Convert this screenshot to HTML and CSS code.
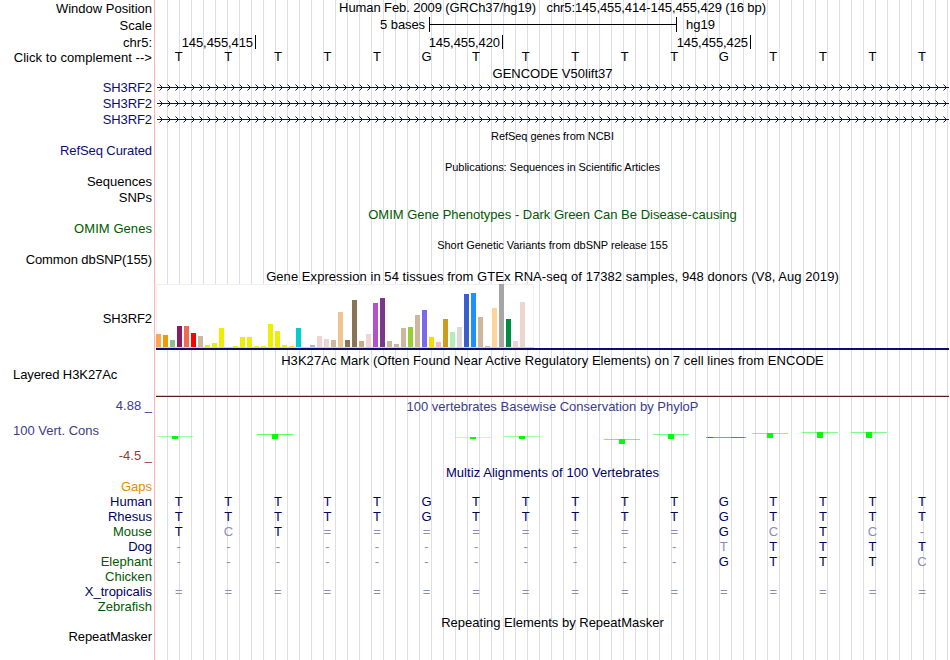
FILE: index.html
```html
<!DOCTYPE html>
<html lang="en">
<head>
  <meta charset="UTF-8" />
  <title>chr5:145,455,414-145,455,429 - Genome Browser</title>
  <link rel="stylesheet" href="styles.css">
</head>
<body>
  <div class="browser">
    <!-- position, scale, ruler -->
    <div class="row position">
      <div class="label low">Window Position</div>
      <div class="plot title tight">Human Feb. 2009 (GRCh37/hg19) &nbsp; chr5:145,455,414-145,455,429 (16 bp)</div>
    </div>
    <div class="row scale">
      <div class="label low">Scale</div>
      <div class="plot scale-plot">
        <span class="scale-size tight">5 bases</span>
        <span class="scale-bar"></span>
        <span>hg19</span>
      </div>
    </div>
    <div class="row ruler">
      <div class="label">chr5:</div>
      <div class="plot ruler-plot tight">
        <span class="tick first">145,455,415</span>
        <span class="tick">145,455,420</span>
        <span class="tick last">145,455,425</span>
      </div>
    </div>
    <div class="row complement">
      <div class="label low wide">Click to complement --&gt;</div>
      <div class="plot bases dark" data-seq="TTTTTGTTTTTGTTTT"></div>
    </div>

    <!-- genes -->
    <div class="row h14"><div class="plot title">GENCODE V50lift37</div></div>
    <div class="row h16"><div class="label gene tight">SH3RF2</div><div class="plot intron"></div></div>
    <div class="row h16"><div class="label gene tight">SH3RF2</div><div class="plot intron"></div></div>
    <div class="row h16"><div class="label gene tight">SH3RF2</div><div class="plot intron"></div></div>
    <div class="row h15"><div class="plot title small">RefSeq genes from NCBI</div></div>
    <div class="row h16"><div class="label gene tight">RefSeq Curated</div></div>
    <div class="row h15"><div class="plot title small">Publications: Sequences in Scientific Articles</div></div>
    <div class="row h16"><div class="label">Sequences</div></div>
    <div class="row h17"><div class="label">SNPs</div></div>
    <div class="row h14"><div class="plot title green">OMIM Gene Phenotypes - Dark Green Can Be Disease-causing</div></div>
    <div class="row h16"><div class="label green wide">OMIM Genes</div></div>
    <div class="row h15"><div class="plot title small">Short Genetic Variants from dbSNP release 155</div></div>
    <div class="row h17"><div class="label tight">Common dbSNP(155)</div></div>

    <!-- GTEx -->
    <div class="row h15"><div class="plot title wide">Gene Expression in 54 tissues from GTEx RNA-seq of 17382 samples, 948 donors (V8, Aug 2019)</div></div>
    <div class="row gtex">
      <div class="label tight">SH3RF2</div>
      <div class="plot gtex-plot"><div class="tissues" id="tissues"></div></div>
    </div>

    <!-- regulation -->
    <div class="row h14"><div class="plot title wide">H3K27Ac Mark (Often Found Near Active Regulatory Elements) on 7 cell lines from ENCODE</div></div>
    <div class="row layered">
      <div class="label left tight">Layered H3K27Ac</div>
      <div class="plot layered-plot"></div>
    </div>

    <!-- conservation -->
    <div class="row phylop">
      <div class="label phylop-label">
        <div class="blue">4.88 _</div>
        <div class="blue left">100 Vert. Cons</div>
        <div class="red">-4.5 _</div>
      </div>
      <div class="plot phylop-plot">
        <div class="title blue">100 vertebrates Basewise Conservation by PhyloP</div>
        <svg class="wiggle" id="wiggle" width="793" height="51" viewBox="156 414 793 51" shape-rendering="crispEdges"></svg>
      </div>
    </div>
    <div class="row h14"><div class="plot title navy wide">Multiz Alignments of 100 Vertebrates</div></div>
    <div class="row h15"><div class="label orange">Gaps</div></div>
    <!-- lower case = differs from human -->
    <div class="row h15"><div class="label navy">Human</div><div class="plot bases" data-seq="TTTTTGTTTTTGTTTT"></div></div>
    <div class="row h15"><div class="label navy">Rhesus</div><div class="plot bases" data-seq="TTTTTGTTTTTGTTTT"></div></div>
    <div class="row h15"><div class="label green">Mouse</div><div class="plot bases" data-seq="TcT========GcTc-"></div></div>
    <div class="row h15"><div class="label navy">Dog</div><div class="plot bases" data-seq="-----------tTTTT"></div></div>
    <div class="row h15"><div class="label green">Elephant</div><div class="plot bases" data-seq="-----------GTTTc"></div></div>
    <div class="row h15"><div class="label green">Chicken</div></div>
    <div class="row h15"><div class="label navy">X_tropicalis</div><div class="plot bases" data-seq="================"></div></div>
    <div class="row h16"><div class="label green">Zebrafish</div></div>

    <div class="row h14"><div class="plot title">Repeating Elements by RepeatMasker</div></div>
    <div class="row h16"><div class="label tight">RepeatMasker</div></div>
  </div>

  <script>
    // one letter per base
    document.querySelectorAll(".bases").forEach(el => {
      [...el.dataset.seq].forEach(ch => {
        const span = document.createElement("span");
        span.textContent = ch.toUpperCase();
        if (!/[A-Z]/.test(ch)) span.className = "mismatch";
        el.appendChild(span);
      });
    });

    // median expression, [height, color]
    const tissues = [
      [13, "#ffa54f"], [12, "#ee9a00"], [7, "#8fbc8f"], [21, "#8b1c62"], [21, "#ee6a50"], [14, "#ff0000"],
      [11, "#cdb79e"], [2, "#eeee00"], [4, "#eeee00"], [19, "#eeee00"], [0, "#eeee00"], [1, "#eeee00"],
      [10, "#eeee00"], [10, "#eeee00"], [1, "#eeee00"], [1, "#eeee00"], [23, "#eeee00"], [16, "#eeee00"],
      [2, "#eeee00"], [1, "#eeee00"], [19, "#00cdcd"], [0, "#ee82ee"], [2, "#9ac0cd"], [11, "#eed5d2"],
      [8, "#eed5d2"], [7, "#cdb79e"], [35, "#eec591"], [7, "#8b7355"], [47, "#8b7355"], [6, "#cdaa7d"],
      [13, "#eed5d2"], [44, "#b452cd"], [49, "#7a378b"], [6, "#cdb79e"], [3, "#cdb79e"], [19, "#cdb79e"],
      [20, "#9acd32"], [32, "#cdb79e"], [37, "#7b68ee"], [10, "#ffd700"], [5, "#ffb6c1"], [28, "#cd9b1d"],
      [15, "#b4eeb4"], [20, "#d9d9d9"], [53, "#3a5fcd"], [54, "#1e90ff"], [30, "#cdb79e"], [1, "#cdb79e"],
      [39, "#ffd39b"], [63, "#a6a6a6"], [28, "#008b45"], [6, "#eed5d2"], [45, "#eed5d2"], [0, "#ff00ff"]
    ];
    document.getElementById("tissues").innerHTML = tissues
      .map(([h, color]) => `<i style="height:${h}px;background:${color}"></i>`).join("");

    // phyloP scores: x, y, block height, line opacity
    const scores = [
      [157, 436, 3, 0.35], [257, 434, 5, 0.6], [455, 437, 2, 0.25], [504, 436, 3, 0.35], [604, 439, 5, 0.6],
      [653, 434, 5, 0.5], [752, 433, 5, 0.5], [802, 432, 6, 0.5], [851, 432, 6, 0.5]
    ];
    document.getElementById("wiggle").innerHTML = scores.map(([x, y, h, o]) =>
      `<rect x="${x}" y="${y}" width="36" height="1" fill="#00ff00" opacity="${o}"/>` +
      `<rect x="${x + 15}" y="${y}" width="6" height="${h}" fill="#00ff00"/>`
    ).join("") +
      `<rect x="706" y="437" width="40" height="1" fill="#8c8cff"/>` +
      `<rect x="708" y="437" width="5" height="1" fill="#5050ff"/>` +
      `<rect x="731" y="437" width="13" height="1" fill="#6464ff"/>`;
  </script>
</body>
</html>
```
FILE: styles.css
```css
body {
  margin: 0;
  background: #fff;
  color: #000;
  font-family: "Liberation Sans", Arial, sans-serif;
  font-size: 13px;
  line-height: 15px;
}

/* guide lines every 12px, pink line between labels and tracks */
.browser {
  height: 660px;
  overflow: hidden;
  background:
    linear-gradient(#ffb4b4, #ffb4b4) 154px 0 / 1px 100% no-repeat,
    repeating-linear-gradient(to right, #dcdcf8 0, #dcdcf8 1px, transparent 1px, transparent 12px) 167px 0 / 782px 100% no-repeat;
}

.row {
  display: grid;
  grid-template-columns: 152px 793px;
  column-gap: 4px;
  white-space: nowrap;
}

.label {
  grid-column: 1;
  text-align: right;
}

.plot {
  grid-column: 2;
}

.title {
  width: 793px;
  text-align: center;
}

.small {
  padding-top: 1px;
  font-size: 11px;
  letter-spacing: -0.06px;
}

.tight { letter-spacing: -0.09px; }
.wide { letter-spacing: 0.06px; }

.low {
  padding-top: 1px;
}

.left {
  text-align: left;
  padding-left: 13px;
}

.h14 { height: 14px; }
.h15 { height: 15px; }
.h16 { height: 16px; }
.h17 { height: 17px; }

/* colors */
.gene { color: #0c0c78; }
.navy { color: #000064; }
.green { color: #005a00; }
.blue { color: #3c3c8c; }
.red { color: #8c3c3c; }
.orange { color: #e68a00; }

/* scale and ruler */
.position { height: 17px; }
.scale { height: 17px; }
.ruler { height: 15px; padding-top: 1px; box-sizing: border-box; }
.complement { height: 17px; }

.scale-plot {
  display: flex;
}

.scale-size {
  width: 269px;
  margin-right: 4px;
  text-align: right;
}

.scale-bar {
  width: 246px;
  height: 15px;
  margin-right: 9px;
  border-left: 1px solid #000;
  border-right: 1px solid #000;
  background: linear-gradient(#000, #000) 0 7px / 100% 1px no-repeat;
}

.ruler-plot {
  display: flex;
}

.tick {
  box-sizing: border-box;
  width: 247px;
  height: 14px;
  padding-right: 2px;
  border-right: 1px solid #000;
  text-align: right;
}

.tick.first { width: 100px; }
.tick.last { width: 248px; }

.bases {
  display: grid;
  grid-template-columns: repeat(16, 49.55px);
  margin-left: -2px;
  text-align: center;
  color: #000064;
}

.bases.dark {
  color: #000;
}

.bases .mismatch {
  color: #8c8cb9;
}

/* intron line with arrows */
.intron {
  height: 7px;
  margin-top: 4px;
  margin-left: 1px;
  background: url("data:image/svg+xml,%3Csvg xmlns='http://www.w3.org/2000/svg' width='8' height='7'%3E%3Cpath d='M0 3.5H8M2.5 .5L5.5 3.5L2.5 6.5' fill='none' stroke='%230c0c78'/%3E%3C/svg%3E") repeat-x;
}

/* GTEx bars */
.gtex {
  height: 69px;
}

.gtex .label {
  padding-top: 27px;
}

.gtex-plot {
  height: 64px;
  border-bottom: 2px solid #0c0c78;
}

.tissues {
  display: flex;
  align-items: flex-end;
  gap: 2px;
  box-sizing: border-box;
  width: 378px;
  height: 64px;
  background: #fff;
  border-bottom: 1px solid #d2d2c8;
  box-shadow: inset 1px 1px #f0f0f0, inset -1px 0 #f0f0f0;
}

.tissues i {
  width: 5px;
}

/* layered H3K27Ac baseline */
.layered {
  height: 31px;
}

.layered-plot {
  height: 29px;
  border-bottom: 1px solid #501e1e;
  box-shadow: inset 0 -1px #ffc878;
}

/* phyloP */
.phylop {
  height: 67px;
}

.phylop-label {
  display: flex;
  flex-direction: column;
  gap: 10px;
}

.phylop-plot {
  padding-top: 1px;
}

.wiggle {
  display: block;
}
```
